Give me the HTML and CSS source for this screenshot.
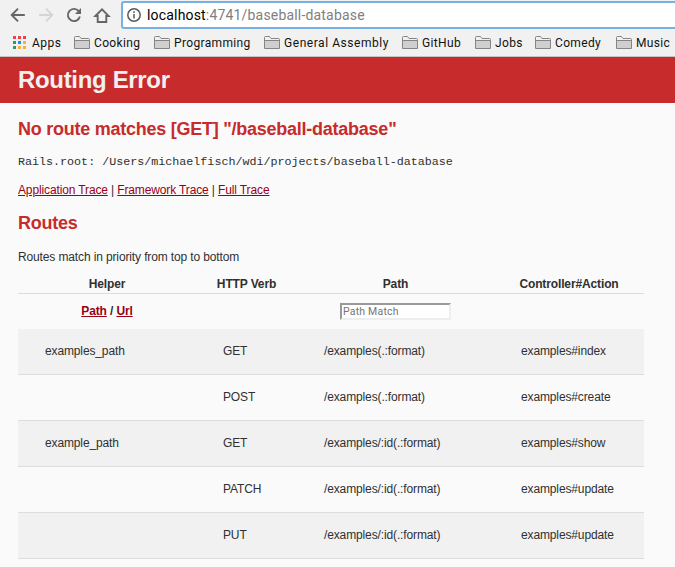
FILE: index.html
```html
<!DOCTYPE html>
<html lang="en">
<head>
<meta charset="utf-8">
<title>Routing Error</title>
<link rel="stylesheet" href="styles.css">
</head>
<body>
<svg class="defs" width="0" height="0" aria-hidden="true">
  <symbol id="folder" viewBox="0 0 16 13">
    <path d="M.5 12.5V1.5q0-1 1-1h4l1.5 2h7.5q1 0 1 1v9z" fill="#f1f1f1" stroke="#858585"/>
    <path d="M1 5h14v7H1z" fill="#cfcfcf"/>
    <path d="M1 4.5h14" stroke="#858585"/>
  </symbol>
</svg>
<div class="browser">
  <div class="toolbar">
    <svg class="nav back" width="16" height="16" viewBox="0 0 16 16"><path d="M14.8 8H2.5M8 1.7L1.7 8L8 14.3"/></svg>
    <svg class="nav forward" width="16" height="16" viewBox="0 0 16 16"><path d="M1.2 8H13.5M8 1.7L14.3 8L8 14.3"/></svg>
    <svg class="nav reload" width="16" height="16" viewBox="0 0 16 16"><path d="M12.8 4.2A6.1 6.1 0 1 0 13.9 9.5"/><path class="solid" d="M15 1v6H9z"/></svg>
    <svg class="nav home" width="18" height="17" viewBox="0 0 18 17"><path d="M2.4 9L9 2.4L15.6 9H13.3V15H4.7V9z"/></svg>
    <div class="address">
      <svg class="info" width="14" height="14" viewBox="0 0 14 14"><circle cx="7" cy="7" r="6.2"/><path d="M7 6v4.5M7 3.3v1.6"/></svg>
      <span class="url"><span class="host">localhost</span>:4741/baseball-database</span>
    </div>
  </div>
  <nav class="bookmarks">
    <span class="mark apps"><svg width="13" height="13" viewBox="0 0 13 13">
      <path fill="#ef4146" d="M0 0h3v3H0zM5 0h3v3H5zM10 0h3v3h-3z"/>
      <path fill="#249f5d" d="M0 5h3v3H0zM0 10h3v3H0z"/><path fill="#1a8cff" d="M5 5h3v3H5z"/>
      <path fill="#fbb034" d="M10 5h3v3h-3zM5 10h3v3H5zM10 10h3v3h-3z"/></svg><span>Apps</span></span>
    <span class="mark cooking"><svg class="folder"><use href="#folder"/></svg><span>Cooking</span></span>
    <span class="mark programming"><svg class="folder"><use href="#folder"/></svg><span>Programming</span></span>
    <span class="mark assembly"><svg class="folder"><use href="#folder"/></svg><span>General Assembly</span></span>
    <span class="mark github"><svg class="folder"><use href="#folder"/></svg><span>GitHub</span></span>
    <span class="mark jobs"><svg class="folder"><use href="#folder"/></svg><span>Jobs</span></span>
    <span class="mark comedy"><svg class="folder"><use href="#folder"/></svg><span>Comedy</span></span>
    <span class="mark music"><svg class="folder"><use href="#folder"/></svg><span>Music</span></span>
  </nav>
</div>
<header><h1>Routing Error</h1></header>
<main>
  <h2 class="message">No route matches [GET] "/baseball-database"</h2>
  <code>Rails.root: /Users/michaelfisch/wdi/projects/baseball-database</code>
  <p class="traces"><a href="#">Application Trace</a> | <a href="#">Framework Trace</a> | <a href="#">Full Trace</a></p>
  <h2 class="routes-title">Routes</h2>
  <p class="hint">Routes match in priority from top to bottom</p>
  <table>
    <colgroup><col class="c-helper"><col class="c-verb"><col class="c-path"><col class="c-action"></colgroup>
    <thead>
      <tr class="titles"><th>Helper</th><th>HTTP Verb</th><th>Path</th><th>Controller#Action</th></tr>
      <tr class="filters"><th><a href="#">Path</a> / <a href="#">Url</a></th><th></th><th><input type="search" placeholder="Path Match"></th><th></th></tr>
    </thead>
    <tbody>
      <tr><td>examples_path</td><td>GET</td><td>/examples(.:format)</td><td>examples#index</td></tr>
      <tr><td></td><td>POST</td><td>/examples(.:format)</td><td>examples#create</td></tr>
      <tr><td>example_path</td><td>GET</td><td>/examples/:id(.:format)</td><td>examples#show</td></tr>
      <tr><td></td><td>PATCH</td><td>/examples/:id(.:format)</td><td>examples#update</td></tr>
      <tr><td></td><td>PUT</td><td>/examples/:id(.:format)</td><td>examples#update</td></tr>
    </tbody>
  </table>
</main>
</body>
</html>
```
FILE: styles.css
```css
* { box-sizing: border-box; }
html { height: 100%; overflow: hidden; }
body {
  margin: 0;
  height: 567px;
  overflow: hidden;
  background: #fafafa;
  color: #303030;
  font: 12px/18px "Liberation Sans", Arial, sans-serif;
  letter-spacing: -.13px;
}
.defs { position: absolute; }

.browser {
  height: 57px;
  background: #f1f1f1;
  border-bottom: 1px solid #c5c5c5;
  color: #111;
  font-family: Roboto, sans-serif;
}
.toolbar { display: flex; height: 30px; align-items: center; padding-left: 10px; }
.nav { flex: none; fill: none; stroke: #666; stroke-width: 1.9; }
.back { margin-right: 12px; }
.forward { margin-right: 12px; stroke: #d5d5d5; }
.reload { margin-right: 11px; }
.reload .solid { fill: #666; stroke: none; }
.home { margin-right: 10px; }
.address {
  display: flex;
  align-items: center;
  flex: 1;
  height: 28px;
  padding-left: 4px;
  background: #fff;
  border: 2px solid #79b0e4;
  border-right: 0;
  border-radius: 3px 0 0 3px;
}
.info { fill: none; stroke: #5a5a5a; stroke-width: 1.5; margin-right: 6px; }
.url { font-size: 14px; letter-spacing: .18px; color: #808080; white-space: nowrap; }
.host { color: #000; }

.bookmarks { display: grid; grid-template-columns: 61px 80px 110px 138px 73px 60px 81px 80px; padding-left: 13px; height: 26px; }
.mark { display: flex; align-items: center; height: 25px; white-space: nowrap; font-size: 12px; letter-spacing: .35px; }
.assembly { letter-spacing: .55px; }
.apps { letter-spacing: .5px; }
.apps svg { margin-right: 6px; }
.folder { width: 16px; height: 13px; flex: none; margin-right: 4px; }

header { height: 46px; background: #c82b2b; padding-left: 18px; }
h1 { margin: 0; color: #f0f0f0; font-size: 24px; line-height: 46px; letter-spacing: -.33px; }
main { padding: 0 18px; }
h2 { margin: 0; color: #c82b2b; font-size: 18px; line-height: 24px; letter-spacing: -.25px; white-space: nowrap; }
.message { padding-top: 14px; }
code { display: block; margin-top: 12px; font: 11.7px/18px "Liberation Mono", monospace; letter-spacing: 0; white-space: nowrap; }
a { color: #980016; }
.traces { margin: 10px 0 0; }
.routes-title { margin-top: 12px; }
.hint { margin: 13px 0 0; }
table { width: 626px; margin-top: 10px; border-collapse: separate; border-spacing: 0; table-layout: fixed; }
.c-helper { width: 178px; }
.c-verb { width: 101px; }
.c-path { width: 197px; }
.c-action { width: 150px; }
th, td { padding: 0; }
.titles th { height: 18px; line-height: 17px; border-bottom: 1px solid #ddd; }
.filters th { height: 35px; padding-bottom: 1px; }
td { height: 46px; padding: 0 0 1px 27px; border-bottom: 1px solid #ddd; white-space: nowrap; }
tbody tr:nth-child(odd) { background: #f1f1f1; }
input {
  display: block;
  width: 111px;
  height: 17px;
  margin: 0 auto;
  padding: 0 1px;
  border: 2px solid;
  border-color: #999 #eee #eee #999;
  background: #fff;
  font: 10.5px "Roboto", sans-serif;
  letter-spacing: .2px;
  -webkit-appearance: none;
}
input::placeholder { color: #757575; }
```
